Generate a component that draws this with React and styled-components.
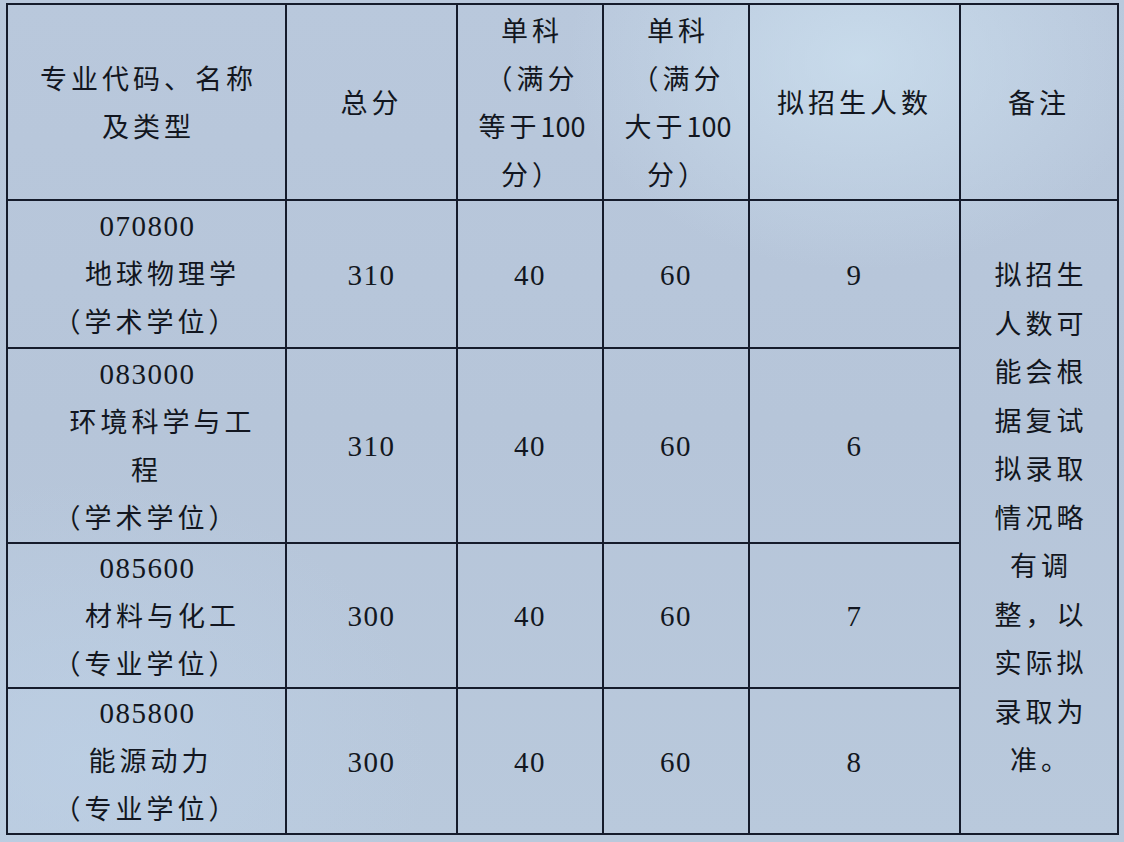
import React from "react";
import styled, { createGlobalStyle } from "styled-components";

const GlobalStyle = createGlobalStyle`
  html, body {
    margin: 0;
    padding: 0;
    width: 1124px;
    height: 842px;
    overflow: hidden;
    background: #b9c8da;
  }
  #root {
    width: 1124px;
    height: 842px;
  }
`;

const Page = styled.div`
  width: 1124px;
  height: 842px;
  box-sizing: border-box;
  padding: 3px 0 0 6px;
  background:
    radial-gradient(ellipse 420px 300px at 860px 60px, rgba(205, 225, 240, 0.75), rgba(205, 225, 240, 0) 70%),
    radial-gradient(ellipse 500px 400px at 80px 760px, rgba(190, 210, 232, 0.6), rgba(190, 210, 232, 0) 70%),
    linear-gradient(180deg, #b9c8dc 0%, #b6c5d9 50%, #b9c9dc 100%);
  font-family: "Noto Sans CJK SC", "Noto Sans", sans-serif;
  color: #121620;
`;

const Table = styled.table`
  border-collapse: collapse;
  table-layout: fixed;
  width: 1113px;
`;

const HeadRow = styled.tr`
  height: 196px;
`;

const BodyRow = styled.tr`
  height: ${(p) => p.$h}px;
`;

const cellBase = `
  border: 2px solid #151b2b;
  text-align: center;
  vertical-align: middle;
  padding: 0 6px;
  font-size: 27px;
  line-height: 48px;
  letter-spacing: 4px;
  font-weight: 400;
`;

const HeadCell = styled.th`
  ${cellBase}
`;

const Cell = styled.td`
  ${cellBase}
`;

const Line = styled.div`
  white-space: nowrap;
  padding-left: ${(p) => (p.$indent || 0) + 4}px;
`;

const Code = styled.div`
  font-family: "Liberation Serif", serif;
  font-size: 29px;
  letter-spacing: 1.5px;
  line-height: 46px;
  padding-left: 2px;
`;

const Num = styled.span`
  font-family: "Liberation Serif", serif;
  font-size: 29px;
  letter-spacing: 1.5px;
`;

const HeadNum = styled.span`
  letter-spacing: 0;
`;

const Name = styled.div`
  padding-left: ${(p) => p.$indent}px;
`;

const Degree = styled.div`
  white-space: nowrap;
`;

const RemarkText = styled.div`
  line-height: 48.5px;
  padding-left: 4px;
`;

const cols = [279, 171, 146, 146, 211, 158];

const rows = [
  { code: "070800", name: ["地球物理学"], indent: 32, degree: "（学术学位）", total: "310", a: "40", b: "60", n: "9", h: 148 },
  { code: "083000", name: ["环境科学与工", "程"], indent: 32, degree: "（学术学位）", total: "310", a: "40", b: "60", n: "6", h: 195 },
  { code: "085600", name: ["材料与化工"], indent: 32, degree: "（专业学位）", total: "300", a: "40", b: "60", n: "7", h: 145 },
  { code: "085800", name: ["能源动力"], indent: 8, degree: "（专业学位）", total: "300", a: "40", b: "60", n: "8", h: 146 },
];

const remark = ["拟招生", "人数可", "能会根", "据复试", "拟录取", "情况略", "有调", "整，以", "实际拟", "录取为", "准。"];

export default function App() {
  return (
    <>
      <GlobalStyle />
      <Page>
        <Table>
          <colgroup>
            {cols.map((w, i) => (
              <col key={i} style={{ width: w }} />
            ))}
          </colgroup>
          <thead>
            <HeadRow>
              <HeadCell>
                <Line>专业代码、名称</Line>
                <Line>及类型</Line>
              </HeadCell>
              <HeadCell>总分</HeadCell>
              <HeadCell>
                <Line>单科</Line>
                <Line>（满分</Line>
                <Line>
                  等于<HeadNum>100</HeadNum>
                </Line>
                <Line>分）</Line>
              </HeadCell>
              <HeadCell>
                <Line>单科</Line>
                <Line>（满分</Line>
                <Line>
                  大于<HeadNum>100</HeadNum>
                </Line>
                <Line>分）</Line>
              </HeadCell>
              <HeadCell>拟招生人数</HeadCell>
              <HeadCell>备注</HeadCell>
            </HeadRow>
          </thead>
          <tbody>
            {rows.map((r, i) => (
              <BodyRow key={r.code} $h={r.h}>
                <Cell>
                  <Code>{r.code}</Code>
                  {r.name.map((t, j) => (
                    <Name key={j} $indent={j === 0 ? r.indent : 0}>
                      {t}
                    </Name>
                  ))}
                  <Degree>{r.degree}</Degree>
                </Cell>
                <Cell>
                  <Num>{r.total}</Num>
                </Cell>
                <Cell>
                  <Num>{r.a}</Num>
                </Cell>
                <Cell>
                  <Num>{r.b}</Num>
                </Cell>
                <Cell>
                  <Num>{r.n}</Num>
                </Cell>
                {i === 0 && (
                  <Cell rowSpan={4}>
                    <RemarkText>
                      {remark.map((t) => (
                        <div key={t}>{t}</div>
                      ))}
                    </RemarkText>
                  </Cell>
                )}
              </BodyRow>
            ))}
          </tbody>
        </Table>
      </Page>
    </>
  );
}
